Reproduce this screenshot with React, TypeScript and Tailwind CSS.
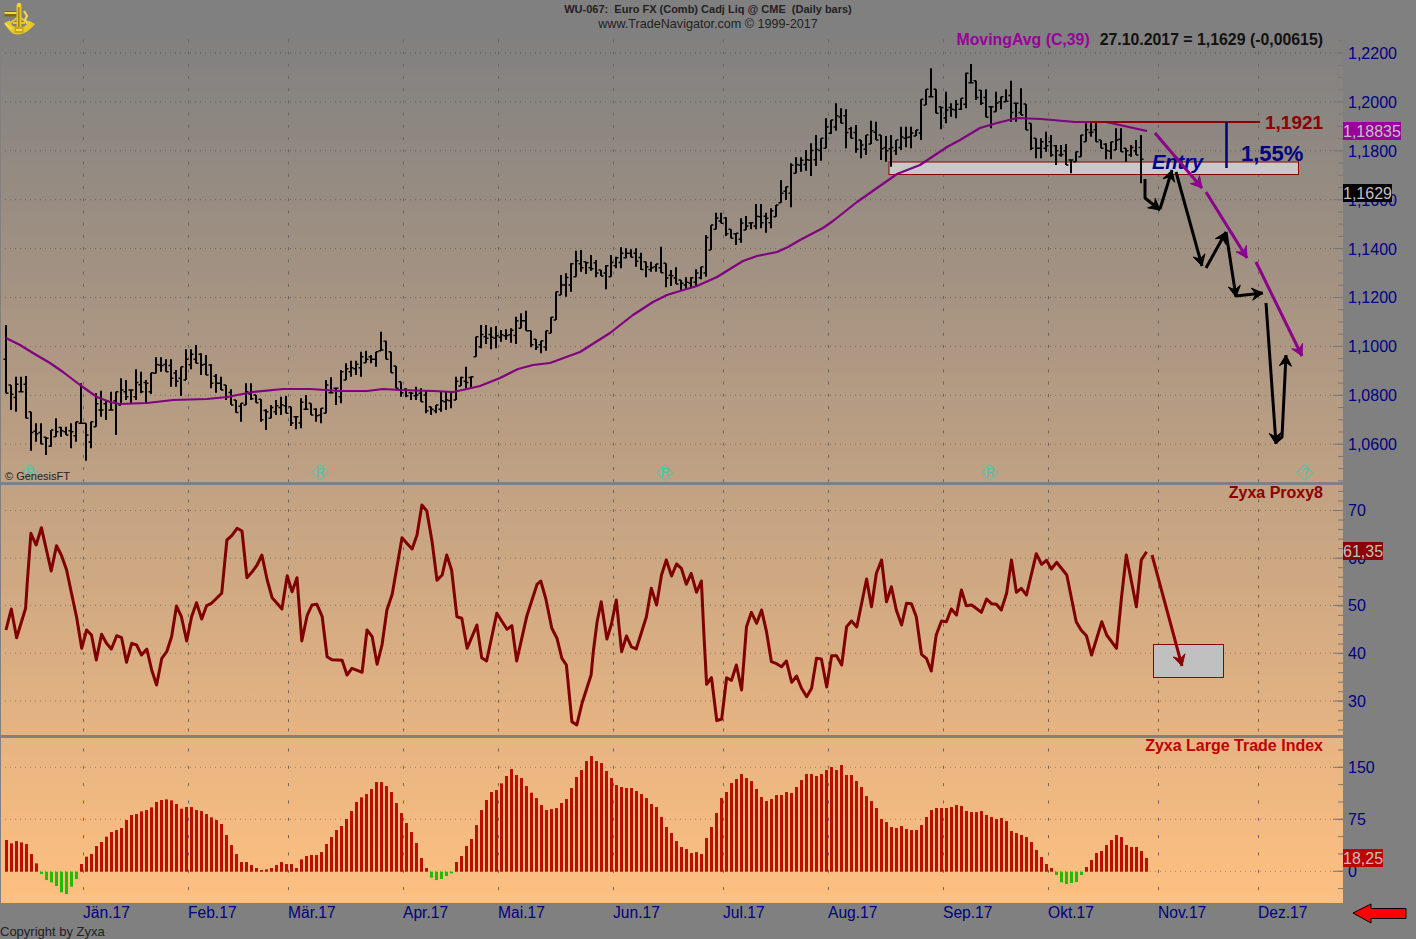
const font = "font-['Liberation_Sans',Arial,sans-serif]";

// bar traces read off the chart, [high, low] pairs per trading day
const barsA = [15,220,195,270,170,275,170,215,168,295,275,392,310,365,310,372,352,405,330,380,295,350,320,350,320,345,310,385,305,365,190,310,310,422,305,385,220,320,212,290,240,300,215,270,215,345,175,255,180,240,210,250,148,240,155,220,180,250,158,222,112,160,112,155,118,155,118,200,150,200,140,228,88,180,88,148,75,130,100,165,105,165,132,205,162,218,170,210,195,240,208,255,240,278,250,305,190,255,190,240,225,248,238,305,268,330,255,295,240,285,230,285,228,280,260,318,290,328,235,325,225,268,250,285,265,305,265,310,180,280,172,218,205,255,150,250,130,180,122,170,122,165,95,170,92,128,105,130,95,140,35,92,62,118,95,158,138,205,185,230,205,232,215,240,200,240,205,245,210,280,260,285,255,280,215,275,215,270,215,265,170,240,170,198,140,205,170,205,50,110];
const barsB = [375,445,375,432,382,448,378,445,390,425,388,420,385,428,350,432,340,385,332,392,392,442,418,450,422,460,392,452,352,400,275,360,225,285,220,290,190,275,152,230,150,215,185,222,165,212,180,232,210,228,195,268,165,230,170,205,142,205,145,175,148,172,145,200,158,210,185,232,185,215,192,215,140,218,190,262,210,258,202,252,240,270,232,268,232,262,208,258,200,238,105,230,75,150,38,88,38,70,52,108,88,115,100,135,55,128,48,90,68,88,12,88,12,85,38,98,25,85,15,50];
const barsC = [360,428,380,420,310,442,292,340,292,335,270,332,250,348,225,318,235,302,175,265,180,222,130,212,145,190,148,265,200,235,195,278,240,295,225,285,182,252,185,240,225,300,228,305,225,320,240,285,200,270,200,262,200,265,210,228,118,240,88,135,25,110,88,160,140,208,95,190,130,170,120,175,115,150,38,145,12,68,62,120,90,135,88,172,140,205,95,155,110,148,88,125,62,185,130,185];
const barsD = [265,345,312,390,370,450,415,475,415,475,395,455,405,470,435,495,435,470,432,495,480,520,455,485,405,470,370,425,368,410,368,425,420,445,430,478,425,478,385,450,385,455,445,485,435,470,420,465,405,550];

function pairs(raw: number[], origin: number) {
  const out: [number, number][] = [];
  for (let i = 0; i < raw.length; i += 2) out.push([origin + raw[i] / 3, origin + raw[i + 1] / 3]);
  return out;
}

const priceBars = [...pairs(barsA, 320), ...pairs(barsB, 200), ...pairs(barsC, 60), ...pairs(barsD, 0)];

const clamp = (v: number, lo: number, hi: number) => Math.min(hi, Math.max(lo, v));
const mid = (b: [number, number]) => (b[0] + b[1]) / 2;

function barsPath() {
  let stems = "";
  let ticks = "";
  priceBars.forEach((b, i) => {
    const x = 6 + 5 * i;
    stems += `M${x} ${b[0].toFixed(1)}V${b[1].toFixed(1)}`;
    const open = clamp(mid(priceBars[Math.max(0, i - 1)]), b[0], b[1]);
    const close = clamp(mid(priceBars[Math.min(priceBars.length - 1, i + 1)]), b[0], b[1]);
    ticks += `M${x - 2.5} ${open.toFixed(1)}H${x}M${x} ${close.toFixed(1)}H${x + 2.5}`;
  });
  return { stems, ticks };
}

const movingAvg = "6,338 20,345 33,353 50,363 63,372 80,385 97,397 110,402 120,404 147,403 173,400 207,399 227,397 253,392 283,389 310,389 340,391 367,391 383,389 400,390 433,391 453,392 467,389 480,386 500,378 518,369 533,365 550,363 580,352 610,333 633,315 653,302 667,295 680,291 697,286 717,277 743,261 757,256 777,252 788,247 800,240 823,228 833,221 857,202 877,188 897,174 920,165 947,147 960,140 980,128 997,123 1017,118 1041,119 1075,122 1106,122 1147,131";

const proxyA = [16,405,30,342,44,428,68,340,72,270,82,115,96,150,110,98,136,228,150,152,163,180,177,225,190,295,204,370,217,460,230,405,243,420,256,495,270,418,283,445,296,462,310,422,323,428,336,502,350,445,363,450,376,480,390,462,403,525,416,570,430,490,443,470,456,425,469,333,482,365,496,438,509,365,522,323,536,372,549,332,562,325,589,295,603,135,616,122,630,100,643,108,656,248,669,232,683,210,696,180,710,255,723,308,736,325,749,342,763,242,776,290,789,248,802,438,816,362,829,330,842,328,856,365,869,485,882,494,909,496,922,540,935,520,949,526,962,532,975,405,989,425,1002,508,1015,450,1028,345,1042,298,1068,128,1081,145,1095,162,1108,120,1121,30,1134,48,1148,140,1161,256,1175,240,1187,180,1200,225,1214,365,1227,370,1241,460,1267,390,1280,488,1293,498,1320,355,1347,403,1360,392,1373,498,1400,362,1427,268,1437,258,1450,310,1466,400,1480,430,1493,490,1505,510];
const proxyB = [5,680,18,690,32,625,56,540,62,470,72,380,83,320,98,432,110,388,123,315,137,470,150,423,163,455,176,462,203,365,216,280,230,330,243,240,256,195,270,243,283,207,296,220,309,268,322,235,336,292,349,258,355,400,363,568,376,548,390,677,403,672,416,548,429,556,442,510,456,585,469,395,482,352,496,385,509,345,522,410,535,500,549,506,562,515,575,498,589,562,602,543,615,580,629,605,642,580,655,490,668,492,682,576,695,482,708,482,722,510,735,395,748,378,762,396,788,252,801,335,814,235,828,195,841,320,854,275,867,345,881,390,894,325,907,326,920,365,934,478,947,490,960,528,973,420,987,378,1000,380,1013,342,1027,360,1040,285,1053,332,1067,330,1093,352,1107,312,1120,326,1133,328,1146,345,1160,295,1173,195,1186,292,1199,280,1213,300,1239,176,1253,208,1266,196,1279,222,1293,202,1320,240,1345,380,1358,405,1372,422,1386,480,1413,380,1426,420,1452,460,1465,310,1478,180,1505,335,1518,195,1532,170];

function proxyPoints() {
  const pts: string[] = [];
  for (let i = 0; i < proxyA.length; i += 2) pts.push(`${(proxyA[i] / 2.657).toFixed(1)},${(495 + proxyA[i + 1] / 3).toFixed(1)}`);
  for (let i = 0; i < proxyB.length; i += 2) pts.push(`${(570 + proxyB[i] / 2.657).toFixed(1)},${(495 + proxyB[i + 1] / 3).toFixed(1)}`);
  return pts.join(" ");
}

const ltiA = [330,340,333,337,342,372,400,432,450,457,468,487,492,470,447,402,380,372,348,336,320,306,300,294,270,255,252,244,240,232,216,210,208,211,222,236,231,231,240,243,252,262,270,282,315,345,372,396,396,405,414,420,418,414,405,396,402,402,414,388,378,375,375,366,342,321,300,288,267,243,216,202,192,177,156,156,168,186,219,249,279,306,339,384,414,443,450,447,438,430,396,378,348];
const ltiB = [267,225,180,150,126,120,100,78,57,75,84,108,128,144,165,180,177,174,159,147,114,81,60,33,18,33,39,63,84,105,111,114,114,123,132,144,162,171,201,231,249,273,291,297,309,306,312,264,231,189,144,126,99,87,72,84,93,117,141,153,147,135,135,126,129,111,90,72,72,78,72,60,51,60,45,75,75,93,111,138,153,174,207,216,231,234,228,237,240,240,225,201,180,174,174,174,171,165,168,183,186,186,183,195,201,207,204,213,243,249,255,261,276,300,321,342,354,375,397,402,399,396,375,351,330,309,303,285,270,255,261,285,291,291,303,324];
const lti = [...ltiA.map((z) => (425 - z) / 3), ...ltiB.map((z) => (365 - z) / 3)];

const monthX = [83, 188, 288, 403, 498, 613, 723, 828, 943, 1048, 1158, 1258];

function levels(y0: number, period: number, top: number, bottom: number) {
  const out: number[] = [];
  let y = y0;
  while (y - period > top) y -= period;
  for (; y < bottom; y += period) out.push(y);
  return out;
}

function Grid({ top, bottom, majors, period }: { top: number; bottom: number; majors: number[]; period: number }) {
  const ticks = levels(majors[0], period, top, bottom);
  return (
    <g>
      {monthX.map((x) => (
        <line key={x} x1={x + 0.5} x2={x + 0.5} y1={ticks[0] - 1.5} y2={bottom} stroke="#666" strokeWidth="1" strokeDasharray={`3 ${period - 3}`} />
      ))}
      {majors.map((y) => (
        <line key={y} x1={5} x2={1333} y1={y} y2={y} stroke="#000" strokeOpacity="0.3" strokeWidth="1" strokeDasharray="1 4" />
      ))}
      {ticks.map((y) => (
        <line key={y} x1={1338} x2={1343} y1={y} y2={y} stroke="#777" />
      ))}
      {majors.map((y) => (
        <line key={y} x1={1333} x2={1343} y1={y} y2={y} stroke="#777" />
      ))}
    </g>
  );
}

function Arrow({ points, color, width = 3, size = 11 }: { points: number[][]; color: string; width?: number; size?: number }) {
  const [ax, ay] = points[points.length - 2];
  const [bx, by] = points[points.length - 1];
  const len = Math.hypot(bx - ax, by - ay);
  const ux = (bx - ax) / len;
  const uy = (by - ay) / len;
  const nx = -uy;
  const ny = ux;
  const hw = size * 0.55;
  const head = [
    [bx, by],
    [bx - ux * size + nx * hw, by - uy * size + ny * hw],
    [bx - ux * size * 0.65, by - uy * size * 0.65],
    [bx - ux * size - nx * hw, by - uy * size - ny * hw],
  ];
  return (
    <g>
      <polyline points={points.map((p) => p.join(",")).join(" ")} fill="none" stroke={color} strokeWidth={width} strokeLinejoin="round" />
      <polygon points={head.map((p) => p.join(",")).join(" ")} fill={color} stroke={color} strokeWidth="1" />
    </g>
  );
}

function Diamond({ x, label }: { x: number; label: string }) {
  return (
    <g>
      <polygon points={`${x - 8},472.5 ${x},464.5 ${x + 8},472.5 ${x},480.5`} fill="none" stroke="#3fc8b4" strokeWidth="1" />
      <text x={x} y={477} textAnchor="middle" fontSize="12" fill="#3fc8b4" fontFamily="Liberation Sans">
        {label}
      </text>
    </g>
  );
}

// brass sextant, drawn in page pixels
function Logo() {
  return (
    <svg width="36" height="36" viewBox="0 0 36 36" className="block">
      <path d="M17 18 L9 24 M21 18 L29 24 M13 23 L25 23" stroke="#e8c828" strokeWidth="2" fill="none" />
      <path d="M24 11 L27 16 L25 20 L28 24" stroke="#efd45a" strokeWidth="2.2" fill="none" />
      <rect x="4.5" y="11" width="12" height="5.5" fill="#7d6a12" />
      <rect x="4.5" y="12" width="12" height="2" fill="#f2d840" />
      <rect x="16.5" y="5" width="5" height="24" fill="#e4c224" />
      <rect x="18" y="7" width="1.5" height="20" fill="#a08818" />
      <circle cx="19" cy="5" r="2.2" fill="#f0d438" />
      <path d="M4 23 L10 20.5 Q11 24 13 26 Q19 28.5 25 26 Q28 24 28.5 20.5 L35 24 Q29 31 24 33 Q19 35.5 13 33.5 Q8 30 4 23 Z" fill="#e8c828" />
      <path d="M5 23.5 L12 29" stroke="#fff08a" strokeWidth="1" />
      <rect x="14.5" y="27" width="9" height="6" fill="#c9a61c" />
      <rect x="16" y="29" width="6" height="2" fill="#f4dc50" />
    </svg>
  );
}

function PricePane() {
  const { stems, ticks } = barsPath();
  const majors = levels(53, 48.9, 32, 470).filter((y) => y >= 53);
  return (
    <div className="relative h-[450px]">
      <svg className="block h-full w-full" viewBox="1 32 1342 450">
        <Grid top={32} bottom={482} majors={majors} period={12.225} />
        <rect x="889" y="162" width="409.5" height="12.5" fill="#c8c8c8" stroke="#8b0000" strokeWidth="1" />
        <path d={stems} stroke="#000" strokeWidth="2" fill="none" />
        <path d={ticks} stroke="#000" strokeWidth="1.5" fill="none" />
        <polyline points={movingAvg} fill="none" stroke="#800080" strokeWidth="2.2" strokeLinejoin="round" />
        <line x1="1090" x2="1260" y1="122" y2="122" stroke="#8b0000" strokeWidth="2" />
        <line x1="1226.5" x2="1226.5" y1="122" y2="168" stroke="#000080" strokeWidth="2.5" />
        <text x="1265" y="129" fontSize="19" fontWeight="700" fill="#8b0000" fontFamily="Liberation Sans">1,1921</text>
        <text x="1241" y="161" fontSize="22" fontWeight="700" fill="#000080" fontFamily="Liberation Sans">1,55%</text>
        <text x="1152" y="169" fontSize="20" fontWeight="700" fontStyle="italic" fill="#000090" fontFamily="Liberation Sans">Entry</text>
        <Arrow color="#8b008b" points={[[1155, 133], [1202, 188]]} />
        <Arrow color="#8b008b" points={[[1206, 192], [1247, 258]]} />
        <Arrow color="#8b008b" points={[[1256, 262], [1302, 356]]} />
        <Arrow color="#000" points={[[1145, 179], [1145, 198], [1160, 210]]} />
        <Arrow color="#000" points={[[1160, 209], [1172, 170]]} />
        <Arrow color="#000" points={[[1176, 172], [1202, 266]]} />
        <Arrow color="#000" points={[[1206, 268], [1226, 232]]} />
        <Arrow color="#000" points={[[1226, 232], [1236, 297]]} />
        <Arrow color="#000" points={[[1236, 296], [1263, 293]]} />
        <Arrow color="#000" points={[[1266, 303], [1276, 444]]} />
        <Arrow color="#000" points={[[1276, 442], [1282, 437], [1286, 355]]} />
        <Diamond x={30} label="R" />
        <Diamond x={320} label="R" />
        <Diamond x={665} label="R" />
        <Diamond x={990} label="R" />
        <Diamond x={1305} label="?" />
      </svg>
      <div className="absolute right-[20px] top-[-2px] flex h-5 items-center gap-[10px] whitespace-pre text-[15.85px] font-bold">
        <span className="text-[#990099]">MovingAvg (C,39)</span>
        <span className="text-[#111]">27.10.2017 = 1,1629 (-0,00615)</span>
      </div>
      <div className="absolute bottom-[-1px] left-[4px] text-[11px] leading-[14px] text-[#222]">© GenesisFT</div>
    </div>
  );
}

function ProxyPane() {
  return (
    <div className="relative h-[250px]">
      <svg className="block h-full w-full" viewBox="1 485 1342 250">
        <Grid top={485} bottom={735} majors={[510.5, 558.2, 605.4, 653.2, 701]} period={9.54} />
        <rect x="1153.5" y="644.5" width="70" height="33" fill="#c0c0c0" stroke="#8b0000" strokeWidth="1" />
        <polyline points={proxyPoints()} fill="none" stroke="#800000" strokeWidth="3" strokeLinejoin="round" />
        <Arrow color="#8b0000" points={[[1152, 555], [1182, 666]]} />
      </svg>
      <div className="absolute right-[20px] top-px text-base font-bold leading-[14px] text-[#8b0000]">Zyxa Proxy8</div>
    </div>
  );
}

function TradeIndexPane() {
  return (
    <div className="relative h-[165px]">
      <svg className="block h-full w-full" viewBox="1 738 1342 165">
        <Grid top={738} bottom={903} majors={[767.3, 819.3, 871.3]} period={17.33} />
        {lti.map((h, i) => (
          <rect
            key={i}
            x={5 + 5 * i}
            y={h >= 0 ? 871.7 - h : 871.7}
            width="3"
            height={Math.abs(h)}
            fill={h >= 0 ? "#bb0e00" : "#22bb00"}
          />
        ))}
      </svg>
      <div className="absolute right-[20px] top-px text-base font-bold leading-[14px] text-[#c00000]">Zyxa Large Trade Index</div>
    </div>
  );
}

const axisLabel = "h-5 text-base leading-5 text-[#000080]";
const badge = "absolute left-0 flex h-[18px] items-center pt-[2px] text-base text-[#c0c0c0]";

function Axis() {
  return (
    <div className="flex w-[73px] flex-col">
      <div className="relative flex h-[450px] flex-col gap-[28.9px] pl-[5px] pt-[12px]">
        {["1,2200", "1,2000", "1,1800", "1,1600", "1,1400", "1,1200", "1,1000", "1,0800", "1,0600"].map((v) => (
          <div key={v} className={axisLabel}>{v}</div>
        ))}
        <div className={`${badge} top-[90px] w-[58px] bg-[#990099]`}>1,18835</div>
        <div className={`${badge} top-[152px] w-[49px] bg-[#000]`}>1,1629</div>
      </div>
      <div className="h-[3px]" />
      <div className="relative flex h-[250px] flex-col gap-[27.7px] pl-[5px] pt-[16px]">
        {["70", "60", "50", "40", "30"].map((v) => (
          <div key={v} className={axisLabel}>{v}</div>
        ))}
        <div className={`${badge} top-[57px] w-[40px] bg-[#8b0000]`}>61,35</div>
      </div>
      <div className="h-[3px]" />
      <div className="relative flex h-[165px] flex-col gap-[32px] pl-[5px] pt-[20px]">
        {["150", "75", "0"].map((v) => (
          <div key={v} className={axisLabel}>{v}</div>
        ))}
        <div className={`${badge} top-[111px] w-[40px] bg-[#c00000]`}>18,25</div>
      </div>
    </div>
  );
}

export default function App() {
  return (
    <div className={`flex h-[939px] w-[1416px] flex-col overflow-hidden bg-[#808080] ${font}`}>
      <header className="relative flex h-8 flex-col items-center pt-[3px]">
        <div className="absolute left-0 top-0">
          <Logo />
        </div>
        <div className="whitespace-pre text-[11px] font-bold leading-[13px] text-[#222]">WU-067:  Euro FX (Comb) Cadj Liq @ CME  (Daily bars)</div>
        <div className="text-[12.6px] leading-4 text-[#222]">www.TradeNavigator.com © 1999-2017</div>
      </header>
      <div className="flex">
        <div className="w-[1343px] pl-px">
          <div className="flex flex-col bg-linear-to-b from-[#808080] to-[#ffc080]">
            <PricePane />
            <div className="h-[3px] bg-[#808080]" />
            <ProxyPane />
            <div className="h-[3px] bg-[#808080]" />
            <TradeIndexPane />
          </div>
        </div>
        <Axis />
      </div>
      <div className="flex h-5 items-center pl-[83px] text-[15.6px] text-[#000080]">
        <span className="w-[105px]">Jän.17</span>
        <span className="w-[100px]">Feb.17</span>
        <span className="w-[115px]">Mär.17</span>
        <span className="w-[95px]">Apr.17</span>
        <span className="w-[115px]">Mai.17</span>
        <span className="w-[110px]">Jun.17</span>
        <span className="w-[105px]">Jul.17</span>
        <span className="w-[115px]">Aug.17</span>
        <span className="w-[105px]">Sep.17</span>
        <span className="w-[110px]">Okt.17</span>
        <span className="w-[100px]">Nov.17</span>
        <span className="w-[60px]">Dez.17</span>
        <svg width="56" height="21" viewBox="0 0 56 21" className="ml-auto mr-[8px]">
          <polygon points="1,10 19,1 19,5.5 54,5.5 54,15.5 19,15.5 19,20" fill="#ff0000" stroke="#000" strokeWidth="1" />
        </svg>
      </div>
      <div className="pt-px text-[13px] leading-4 text-[#222]">Copyright by Zyxa</div>
    </div>
  );
}
